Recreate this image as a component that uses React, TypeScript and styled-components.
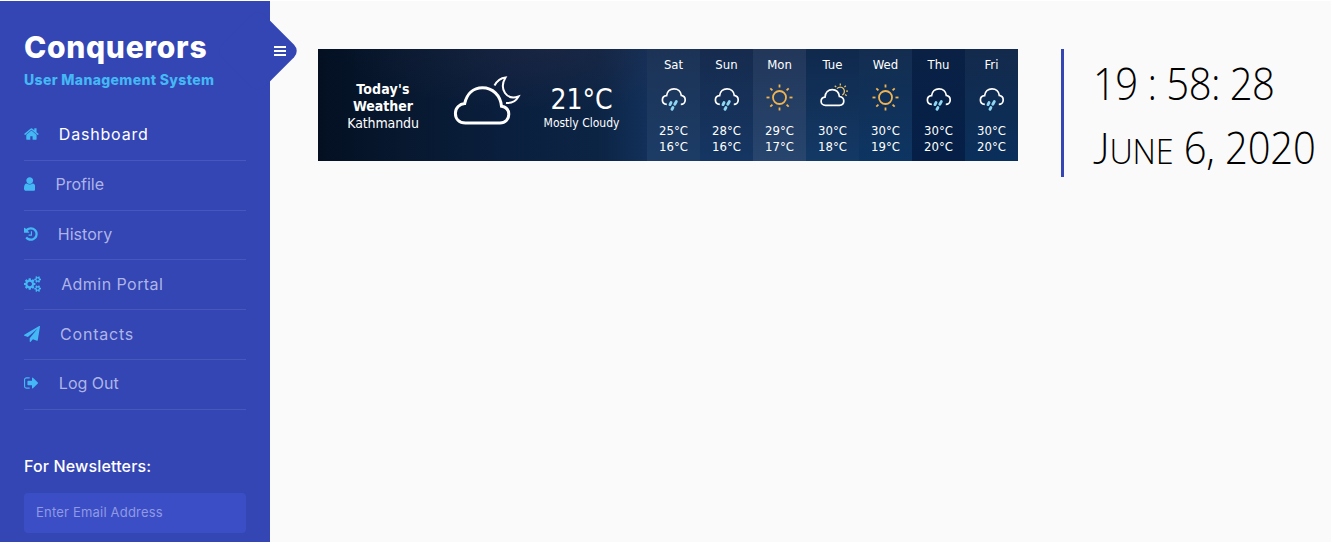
import React from "react";
import styled, { createGlobalStyle } from "styled-components";

const GlobalStyle = createGlobalStyle`
  * { box-sizing: border-box; }
  html, body { margin: 0; padding: 0; background: #fafafa; }
  body { border-top: 1px solid #fff; overflow: hidden; }
  p, h1, h2, ul { margin: 0; padding: 0; }
`;

const sans = `Inter, "Open Sans", sans-serif`;
const tahoma = `"DejaVu Sans Condensed", "DejaVu Sans", sans-serif`;

const Page = styled.div`
  display: flex;
  height: 541px;
  overflow: hidden;
  font-family: ${sans};
`;

const Sidebar = styled.nav`
  position: relative;
  flex: 0 0 270px;
  background: #3445b4;
  padding: 24px 24px 0;
`;

const Toggle = styled.button`
  position: absolute;
  top: 20px;
  left: 228px;
  width: 60px;
  height: 60px;
  border: 0;
  border-radius: 9px;
  background: #3445b4;
  transform: rotate(45deg);
`;

const Bars = styled.span`
  position: absolute;
  top: 45px;
  left: 274px;
  width: 12px;
  height: 10px;
  border: solid #fff;
  border-width: 2px 0;
  background: linear-gradient(#fff, #fff) 0 2px / 12px 2px no-repeat;
`;

const Brand = styled.h1`
  font-size: 30px;
  line-height: 44px;
  font-weight: 800;
  color: #fff;
`;

const Tagline = styled.p`
  font-size: 14px;
  line-height: 21px;
  font-weight: 800;
  color: #44b8f5;
`;

const Menu = styled.ul`
  list-style: none;
  margin-top: 21px;
`;

const MenuItem = styled.li<{ $active?: boolean }>`
  display: flex;
  align-items: center;
  gap: 20px;
  height: 49.8px;
  padding-bottom: 2px;
  border-bottom: 1px solid #4757be;
  font-size: 16px;
  color: ${(p) => (p.$active ? "#fff" : "#aeb5e6")};
`;

const Glyph = styled.svg`
  height: 16px;
  fill: #44b8f5;
  flex: none;
`;

const Txt = styled.span<{ $ls?: number }>`
  letter-spacing: ${(p) => p.$ls ?? 0}px;
  white-space: nowrap;
`;

const NewsTitle = styled.h2`
  margin-top: 43px;
  font-size: 16px;
  line-height: 26px;
  font-weight: 500;
  color: #fff;
`;

const EmailInput = styled.div`
  margin-top: 14px;
  height: 40px;
  border-radius: 4px;
  background: #3c4ec6;
  padding: 0 12px;
  font-size: 13px;
  line-height: 38px;
  color: #8f9ae3;
`;

const Main = styled.main`
  display: flex;
  align-items: flex-start;
  flex: 1;
  padding: 48px 0 0 48px;
`;

const Weather = styled.section`
  display: flex;
  width: 700px;
  height: 112px;
  flex: none;
  color: #fff;
  font-family: ${tahoma};
  background:
    radial-gradient(ellipse 200px 60px at 32% 0, rgba(50, 45, 70, 0.35), transparent),
    linear-gradient(90deg, #041022 0, #07182f 12%, #0a1f3e 27%, #0c2444 40%, #12305a 47%, #0a2c58 100%);
`;

const Place = styled.div`
  width: 130px;
  padding-top: 32px;
  font-size: 14px;
  line-height: 17px;
  text-align: center;
`;

const Bold = styled.p`
  font-weight: 700;
`;

const BigIcon = styled.svg`
  width: 70px;
  height: 54px;
  margin: 24px 0 0 3px;
  fill: none;
  stroke: #fff;
`;

const Current = styled.div`
  width: 121px;
  padding-top: 34px;
  text-align: center;
`;

const Degrees = styled.p`
  font-size: 28px;
  line-height: 34px;
`;

const Condition = styled.p`
  font-size: 12px;
  line-height: 14px;
  margin-top: -1px;
`;

const Days = styled.div`
  display: flex;
  width: 371px;
  margin-left: auto;
`;

const Day = styled.div<{ $bg: string }>`
  display: flex;
  flex-direction: column;
  align-items: center;
  flex: 1;
  padding-top: 8px;
  background: ${(p) => p.$bg};
  font-size: 13px;
  line-height: 16px;
`;

const DayIcon = styled.svg`
  width: 30px;
  height: 30px;
  margin: 10px 0;
  flex: none;
  fill: none;
  stroke: #fff;
`;

const Clock = styled.section`
  width: 270px;
  flex: none;
  height: 128px;
  margin-left: 43px;
  padding: 2px 0 0 29px;
  border-left: 3px solid #3445b4;
  font-family: "Open Sans", sans-serif;
  font-weight: 300;
  font-size: 44px;
  line-height: 64px;
  color: #000;
  white-space: nowrap;
`;

const ClockLine = styled.p`
  width: max-content;
  transform: scaleX(0.91);
  transform-origin: left center;
`;

const Initial = styled.span`
  font-family: Lato, sans-serif;
`;

const SmallCaps = styled.span`
  font-size: 0.81em;
`;

const items = [
  { label: "Dashboard", ls: 0.8, box: "64 0 1664 1792", w: 14.86, d: "M1472 992v480q0 26-19 45t-45 19h-384v-384h-256v384h-384q-26 0-45-19t-19-45v-480q0-1 .5-3t.5-3l575-474 575 474q1 2 1 6zm223-69l-62 74q-8 9-21 11h-3q-13 0-21-7l-692-577-692 577q-12 8-24 7-13-2-21-11l-62-74q-8-10-7-23.5t11-21.5l719-599q32-26 76-26t76 26l244 204v-195q0-14 9-23t23-9h192q14 0 23 9t9 23v408l219 182q10 8 11 21.5t-7 23.5z" },
  { label: "Profile", ls: 0, box: "256 0 1280 1792", w: 11.43, d: "M1536 1399q0 109-62.5 187t-150.5 78h-854q-88 0-150.5-78t-62.5-187q0-85 8.5-160.5t31.5-152 58.5-131 94-89 134.5-34.5q131 128 313 128t313-128q76 0 134.5 34.5t94 89 58.5 131 31.5 152 8.5 160.5zm-256-887q0 159-112.5 271.5t-271.5 112.5-271.5-112.5-112.5-271.5 112.5-271.5 271.5-112.5 271.5 112.5 112.5 271.5z" },
  { label: "History", ls: 0.05, box: "128 0 1536 1792", w: 13.71, d: "M1664 896q0 156-61 298t-164 245-245 164-298 61q-172 0-327-72.5t-264-204.5q-7-10-6.5-22.5t8.5-20.5l137-138q10-9 25-9 16 2 23 12 73 95 179 147t225 52q104 0 198.5-40.5t163.5-109.5 109.5-163.5 40.5-198.5-40.5-198.5-109.5-163.5-163.5-109.5-198.5-40.5q-98 0-188 35.5t-160 101.5l137 138q31 30 14 69-17 40-59 40h-448q-26 0-45-19t-19-45v-448q0-42 40-59 39-17 69 14l130 129q107-101 244.5-156.5t284.5-55.5q156 0 298 61t245 164 164 245 61 298zm-640-288v448q0 14-9 23t-23 9h-320q-14 0-23-9t-9-23v-64q0-14 9-23t23-9h224v-352q0-14 9-23t23-9h64q14 0 23 9t9 23z" },
  { label: "Admin Portal", ls: 0.45, box: "-64 0 1920 1792", w: 17.14, d: "M832 896q0-106-75-181t-181-75-181 75-75 181 75 181 181 75 181-75 75-181zm768 512q0-52-38-90t-90-38-90 38-38 90q0 53 37.5 90.5t90.5 37.5 90.5-37.5 37.5-90.5zm0-1024q0-52-38-90t-90-38-90 38-38 90q0 53 37.5 90.5t90.5 37.5 90.5-37.5 37.5-90.5zm-384 421v185q0 10-7 19.5t-16 10.5l-155 24q-11 35-32 76 34 48 90 115 7 11 7 20 0 12-7 19-23 30-82.5 89.5t-78.5 59.5q-11 0-21-7l-115-90q-37 19-77 31-11 108-23 155-7 24-30 24h-186q-11 0-20-7.5t-10-17.5l-23-153q-34-10-75-31l-118 89q-7 7-20 7-11 0-21-8-144-133-144-160 0-9 7-19 10-14 41-53t47-61q-23-44-35-82l-152-24q-10-1-17-9.5t-7-19.5v-185q0-10 7-19.5t16-10.5l155-24q11-35 32-76-34-48-90-115-7-11-7-20 0-12 7-20 22-30 82-89t79-59q11 0 21 7l115 90q34-18 77-32 11-108 23-154 7-24 30-24h186q11 0 20 7.5t10 17.5l23 153q34 10 75 31l118-89q8-7 20-7 11 0 21 8 144 133 144 160 0 8-7 19-12 16-42 54t-45 60q23 48 34 82l152 23q10 2 17 10.5t7 19.5zm640 533v140q0 16-149 31-12 27-30 52 51 113 51 138 0 4-4 7-122 71-124 71-8 0-46-47t-52-68q-20 2-30 2t-30-2q-14 21-52 68t-46 47q-2 0-124-71-4-3-4-7 0-25 51-138-18-25-30-52-149-15-149-31v-140q0-16 149-31 13-29 30-52-51-113-51-138 0-4 4-7 4-2 35-20t59-34 30-16q8 0 46 46.5t52 67.5q20-2 30-2t30 2q51-71 92-112l6-2q4 0 124 70 4 3 4 7 0 25-51 138 17 23 30 52 149 15 149 31zm0-1024v140q0 16-149 31-12 27-30 52 51 113 51 138 0 4-4 7-122 71-124 71-8 0-46-47t-52-68q-20 2-30 2t-30-2q-14 21-52 68t-46 47q-2 0-124-71-4-3-4-7 0-25 51-138-18-25-30-52-149-15-149-31v-140q0-16 149-31 13-29 30-52-51-113-51-138 0-4 4-7 4-2 35-20t59-34 30-16q8 0 46 46.5t52 67.5q20-2 30-2t30 2q51-71 92-112l6-2q4 0 124 70 4 3 4 7 0 25-51 138 17 23 30 52 149 15 149 31z" },
  { label: "Contacts", ls: 0.8, box: "0 0 1792 1792", w: 16, d: "M1764 11q33 24 27 64l-256 1536q-5 29-32 45-14 8-31 8-11 0-24-5l-453-185-242 295q-18 23-49 23-13 0-22-4-19-7-30.5-23.5t-11.5-36.5v-349l864-1059-1069 925-395-162q-37-14-40-55-2-40 32-59l1664-960q15-9 32-9 20 0 36 11z" },
  { label: "Log Out", ls: 0, box: "64 0 1664 1792", w: 14.86, d: "M704 1440q0 4 1 20t.5 26.5-3 23.5-10 19.5-20.5 6.5h-320q-119 0-203.5-84.5t-84.5-203.5v-704q0-119 84.5-203.5t203.5-84.5h320q13 0 22.5 9.5t9.5 22.5q0 4 1 20t.5 26.5-3 23.5-10 19.5-20.5 6.5h-320q-66 0-113 47t-47 113v704q0 66 47 113t113 47h312l11.5 1 11.5 3 8 5.5 7 9 2 13.5zm928-544q0 26-19 45l-544 544q-19 19-45 19t-45-19-19-45v-288h-448q-26 0-45-19t-19-45v-384q0-26 19-45t45-19h448v-288q0-26 19-45t45-19 45 19l544 544q19 19 19 45z" },
];

const Rain = () => (
  <DayIcon viewBox="0 0 30 30">
    <path d="M7.8 21.400C5 21.200 3.400 19.200 3.400 17c0-2.500 1.800-4.300 4.200-4.400C8 8.500 11.100 5.800 15 5.800c4 0 6.900 2.800 7.300 6.600 2.400.4 3.900 2.300 3.900 4.600 0 2.500-1.800 4.400-4.400 4.400" strokeWidth="1.700" />
    <path d="M12 19.600l-1 2M17.300 18.600l-1.500 2.700M13.900 24.600l-.9 1.700" stroke="#8fd6f2" strokeWidth="2.900" strokeLinecap="round" />
  </DayIcon>
);

const rays = [0, 45, 90, 135, 180, 225, 270, 315];

const Sun = () => (
  <DayIcon viewBox="0 0 30 30">
    <g stroke="#f0b450" strokeWidth="1.800">
      <circle cx="14.500" cy="14.500" r="6.500" />
      {rays.map((a) => (
        <path key={a} d="M14.500 4.500V1.500" transform={`rotate(${a} 14.500 14.500)`} />
      ))}
    </g>
  </DayIcon>
);

const PartSun = () => (
  <DayIcon viewBox="0 0 30 30">
    <g stroke="#e8c468" strokeWidth="1.300">
      <path d="M19 5.600a4.200 4.200 0 1 1 5.200 6.400" />
      {[-45, 0, 45, 90, 125].map((a) => (
        <path key={a} d="M22.300 2.400V.4" transform={`rotate(${a} 22.300 8.200)`} />
      ))}
    </g>
    <path d="M7.500 22.300C4.900 22.300 3.100 20.400 3.100 18.200c0-2.300 1.600-3.900 3.900-4.100C7.300 9.600 10.300 6.600 14.200 6.600c3.800 0 6.700 2.700 7.200 6.900 2.500.3 4.400 2.100 4.400 4.500 0 2.500-1.800 4.300-4.400 4.300z" strokeWidth="1.700" />
  </DayIcon>
);

const days = [
  { n: "Sat", hi: 25, lo: 16, icon: <Rain />, bg: "linear-gradient(#1c3356, #1c3c66)" },
  { n: "Sun", hi: 28, lo: 16, icon: <Rain />, bg: "linear-gradient(#162b4e, #153663)" },
  { n: "Mon", hi: 29, lo: 17, icon: <Sun />, bg: "linear-gradient(#22375a, #27456e)" },
  { n: "Tue", hi: 30, lo: 18, icon: <PartSun />, bg: "linear-gradient(#10294d, #133965)" },
  { n: "Wed", hi: 30, lo: 19, icon: <Sun />, bg: "linear-gradient(#132d50, #0d3562)" },
  { n: "Thu", hi: 30, lo: 20, icon: <Rain />, bg: "linear-gradient(#0a2145, #051f47)" },
  { n: "Fri", hi: 30, lo: 20, icon: <Rain />, bg: "linear-gradient(#132a4c, #0a2f5b)" },
];

export default function App() {
  return (
    <Page>
      <GlobalStyle />
      <Sidebar>
        <Toggle aria-label="Toggle menu" />
        <Bars />
        <Brand><Txt $ls={0.7}>Conquerors</Txt></Brand>
        <Tagline><Txt $ls={0.35}>User Management System</Txt></Tagline>
        <Menu>
          {items.map((it, i) => (
            <MenuItem key={it.label} $active={i === 0}>
              <Glyph viewBox={it.box} width={it.w}><path d={it.d} /></Glyph>
              <Txt $ls={it.ls}>{it.label}</Txt>
            </MenuItem>
          ))}
        </Menu>
        <NewsTitle><Txt $ls={0.15}>For Newsletters:</Txt></NewsTitle>
        <EmailInput><Txt $ls={0.2}>Enter Email Address</Txt></EmailInput>
      </Sidebar>
      <Main>
        <Weather>
          <Place>
            <Bold><Txt $ls={0.2}>Today's</Txt></Bold>
            <Bold><Txt>Weather</Txt></Bold>
            <p><Txt $ls={-0.12}>Kathmandu</Txt></p>
          </Place>
          <BigIcon viewBox="0 0 70 54">
            <path d="M14.500 50C8 50 4.400 45.800 4.400 40.300c0-5.500 4.300-9.300 9.300-9.800C15.800 21 22 14.800 31.500 14.800c10 0 18 7.500 19 18.500 4.600.8 7.300 4 7.300 8 0 5-3.500 8.700-8.800 8.700z" strokeWidth="3" />
            <path d="M43.500 12.500C46 8 50 5 54.500 4.500c-3 5-3.500 11-.5 15.500 3 4.300 8 5.500 13.500 3.500-2.500 4.500-7 7-12.500 6.500" strokeWidth="2" />
          </BigIcon>
          <Current>
            <Degrees><Txt>21°C</Txt></Degrees>
            <Condition><Txt>Mostly Cloudy</Txt></Condition>
          </Current>
          <Days>
            {days.map((d) => (
              <Day key={d.n} $bg={d.bg}>
                <Txt>{d.n}</Txt>
                {d.icon}
                <Txt>{d.hi}°C</Txt>
                <Txt>{d.lo}°C</Txt>
              </Day>
            ))}
          </Days>
        </Weather>
        <Clock>
          <ClockLine><Txt $ls={-0.6}>19 : 58: 28</Txt></ClockLine>
          <ClockLine><Txt $ls={-0.2}><Initial>J</Initial><SmallCaps>UNE</SmallCaps> 6, 2020</Txt></ClockLine>
        </Clock>
      </Main>
    </Page>
  );
}
